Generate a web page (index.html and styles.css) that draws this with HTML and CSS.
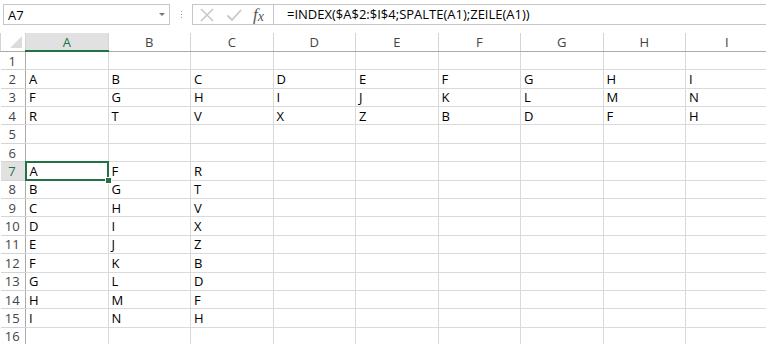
FILE: index.html
```html
<!DOCTYPE html>
<html lang="de">
<head>
    <meta charset="UTF-8">
    <title>Mappe1 - Excel</title>
    <link rel="stylesheet" href="styles.css">
</head>
<body>
    <div class="formula-bar">
        <div class="name-box">
            <span>A7</span>
            <span class="caret"></span>
        </div>
        <div class="grip"><i></i><i></i><i></i></div>
        <div class="fx-buttons">
            <svg class="btn-icon" width="16" height="16" viewBox="0 0 16 16"><path d="M2 2 L14 14 M14 2 L2 14" stroke="#c8c8c8" stroke-width="1.6" fill="none"/></svg>
            <svg class="btn-icon" width="16" height="16" viewBox="0 0 16 16"><path d="M1.5 8.5 L6 13 L15 3" stroke="#c8c8c8" stroke-width="1.8" fill="none"/></svg>
            <span class="fx">f<span class="fx-x">x</span></span>
        </div>
        <div class="formula">=INDEX($A$2:$I$4;SPALTE(A1);ZEILE(A1))</div>
    </div>

    <table class="sheet">
        <colgroup>
            <col class="col-head">
            <col><col><col><col><col><col><col><col><col>
        </colgroup>
        <thead>
            <tr>
                <th class="corner"><span></span></th>
                <th class="sel">A</th><th>B</th><th>C</th><th>D</th><th>E</th><th>F</th><th>G</th><th>H</th><th>I</th>
            </tr>
        </thead>
        <tbody>
            <tr><th>1</th><td></td><td></td><td></td><td></td><td></td><td></td><td></td><td></td><td></td></tr>
            <tr><th>2</th><td>A</td><td>B</td><td>C</td><td>D</td><td>E</td><td>F</td><td>G</td><td>H</td><td>I</td></tr>
            <tr><th>3</th><td>F</td><td>G</td><td>H</td><td>I</td><td>J</td><td>K</td><td>L</td><td>M</td><td>N</td></tr>
            <tr><th>4</th><td>R</td><td>T</td><td>V</td><td>X</td><td>Z</td><td>B</td><td>D</td><td>F</td><td>H</td></tr>
            <tr><th>5</th><td></td><td></td><td></td><td></td><td></td><td></td><td></td><td></td><td></td></tr>
            <tr><th>6</th><td></td><td></td><td></td><td></td><td></td><td></td><td></td><td></td><td></td></tr>
            <tr><th class="sel">7</th><td class="active">A</td><td>F</td><td>R</td><td></td><td></td><td></td><td></td><td></td><td></td></tr>
            <tr><th>8</th><td>B</td><td>G</td><td>T</td><td></td><td></td><td></td><td></td><td></td><td></td></tr>
            <tr><th>9</th><td>C</td><td>H</td><td>V</td><td></td><td></td><td></td><td></td><td></td><td></td></tr>
            <tr><th>10</th><td>D</td><td>I</td><td>X</td><td></td><td></td><td></td><td></td><td></td><td></td></tr>
            <tr><th>11</th><td>E</td><td>J</td><td>Z</td><td></td><td></td><td></td><td></td><td></td><td></td></tr>
            <tr><th>12</th><td>F</td><td>K</td><td>B</td><td></td><td></td><td></td><td></td><td></td><td></td></tr>
            <tr><th>13</th><td>G</td><td>L</td><td>D</td><td></td><td></td><td></td><td></td><td></td><td></td></tr>
            <tr><th>14</th><td>H</td><td>M</td><td>F</td><td></td><td></td><td></td><td></td><td></td><td></td></tr>
            <tr><th>15</th><td>I</td><td>N</td><td>H</td><td></td><td></td><td></td><td></td><td></td><td></td></tr>
            <tr><th>16</th><td></td><td></td><td></td><td></td><td></td><td></td><td></td><td></td><td></td></tr>
        </tbody>
    </table>
</body>
</html>
```

FILE: styles.css
```css
body {
    margin: 0;
    background: #ffffff;
    font-family: 'Open Sans', 'Liberation Sans', sans-serif;
    font-size: 13px;
    color: #000;
    overflow: hidden;
}

/* formula bar */
.formula-bar {
    display: flex;
    align-items: center;
    height: 23px;
    padding: 3px 0 0 3px;
    margin-bottom: 7px;
}
.name-box {
    display: flex;
    align-items: center;
    justify-content: space-between;
    width: 167px;
    height: 21px;
    box-sizing: border-box;
    border: 1px solid #c6c6c6;
    padding: 0 4px 0 4px;
    font-size: 13px;
}
.caret {
    width: 0;
    height: 0;
    border-left: 3px solid transparent;
    border-right: 3px solid transparent;
    border-top: 3px solid #777;
}
.grip {
    display: flex;
    flex-direction: column;
    gap: 2px;
    width: 22px;
    align-items: center;
}
.grip i {
    width: 1px;
    height: 1px;
    background: #9a9a9a;
}
.fx-buttons {
    display: flex;
    align-items: center;
    gap: 11px;
    width: 81px;
    height: 21px;
    box-sizing: border-box;
    border: 1px solid #c6c6c6;
    border-right: none;
    padding-left: 6px;
}
.fx {
    font-family: 'Liberation Serif', serif;
    font-style: italic;
    font-size: 17px;
    color: #555;
    line-height: 1;
}
.fx-x {
    font-size: 14px;
    position: relative;
    top: 1px;
}
.formula {
    flex: 1;
    height: 21px;
    box-sizing: border-box;
    border: 1px solid #c6c6c6;
    border-right: none;
    padding-left: 13px;
    line-height: 19px;
    font-size: 13px;
}

/* sheet grid */
.sheet {
    border-collapse: collapse;
    table-layout: fixed;
    width: 767.5px;
}
.sheet col { width: 82.5px; }
.sheet col.col-head { width: 25px; }
.sheet tr { height: 18.4px; }
.sheet td {
    border: 1px solid #dadada;
    padding: 0 0 0 3px;
    line-height: 16px;
    white-space: nowrap;
}
.sheet tbody tr:first-child td { border-top: none; }
.sheet th {
    font-weight: normal;
    color: #444;
    background: #ffffff;
    border: 1px solid #d4d4d4;
    padding: 0;
    line-height: 16px;
}
.sheet thead th {
    height: 16px;
    border-top: none;
    border-bottom: 1px solid #ababab;
}
.sheet tbody th {
    border-left: none;
    border-right: 1px solid #ababab;
    text-align: center;
    padding-right: 1px;
}
.sheet th.sel {
    background: #e1e1e1;
    color: #217346;
}
.sheet thead th.sel { border-bottom: 2px solid #217346; }
.sheet tbody th.sel { border-right: 2px solid #217346; }
.corner {
    position: relative;
    border-left: none;
}
.corner span {
    position: absolute;
    right: 3px;
    bottom: 3px;
    width: 0;
    height: 0;
    border-left: 12px solid transparent;
    border-bottom: 12px solid #dcdcdc;
}
.sheet td.active {
    position: relative;
    outline: 2px solid #217346;
    outline-offset: -1px;
}
.sheet td.active::after {
    content: "";
    position: absolute;
    right: -4px;
    bottom: -4px;
    width: 5px;
    height: 5px;
    background: #217346;
    border: 1px solid #fff;
}
```
